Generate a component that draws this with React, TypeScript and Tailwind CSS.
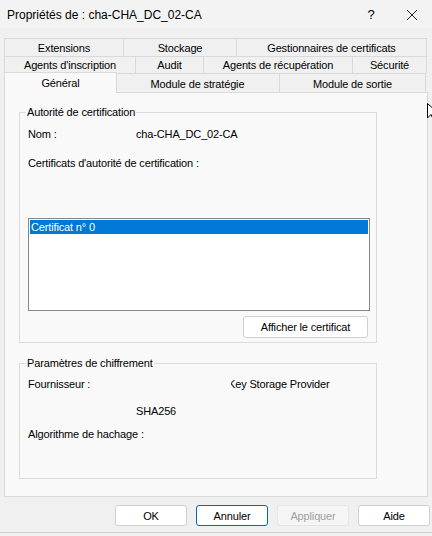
import React from "react";

const font = { fontFamily: '"Liberation Sans", Arial, sans-serif', letterSpacing: "-0.15px" };

function Tab({ w, label }: { w: string; label: string }) {
  return (
    <div
      className={`${w} shrink-0 flex items-center justify-center pt-px border-t border-l border-r border-[#d9d9d9] -ml-px first:ml-0 text-[11px] leading-[13px] text-black bg-[#f0f0f0]`}
    >
      {label}
    </div>
  );
}

export default function App() {
  return (
    <div className="relative w-[432px] h-[536px] bg-[#f0f0f0] text-black overflow-hidden" style={font}>
      {/* Title bar */}
      <div className="h-[30px] flex items-center bg-[#f3f3f3] border-b border-[#ebebeb]">
        <div className="pl-[7px] text-[12px] leading-[14px] tracking-normal">Propriétés de : cha-CHA_DC_02-CA</div>
        <div className="ml-auto flex items-center">
          <div className="w-[20px] text-center text-[13px] leading-[14px] mr-[25px]">?</div>
          <svg width="12" height="12" viewBox="0 0 12 12" className="mr-[14px]">
            <path d="M1 1L11 11M11 1L1 11" stroke="#222" strokeWidth="1" />
          </svg>
        </div>
      </div>

      {/* Tabs */}
      <div className="mt-[8px] ml-[4px] w-[422px] flex flex-col">
        <div className="h-[18px] flex">
          <Tab w="w-[120px]" label="Extensions" />
          <Tab w="w-[114px]" label="Stockage" />
          <Tab w="w-[191px]" label="Gestionnaires de certificats" />
        </div>
        <div className="h-[17px] flex">
          <Tab w="w-[132px]" label="Agents d'inscription" />
          <Tab w="w-[69px]" label="Audit" />
          <Tab w="w-[150px]" label="Agents de récupération" />
          <Tab w="w-[75px]" label="Sécurité" />
        </div>
        <div className="h-[19px] flex items-end">
          <div className="relative z-10 w-[113px] h-[21px] -mb-px shrink-0 flex items-start pt-[4px] justify-center border-t border-l border-r border-[#d9d9d9] bg-[#f9f9f9] text-[11px] leading-[13px]">
            Général
          </div>
          <div className="w-[164px] h-[19px] -ml-px shrink-0 flex items-center justify-center pt-[3px] border-t border-r border-[#d9d9d9] text-[11px] leading-[13px]">
            Module de stratégie
          </div>
          <div className="w-[147px] h-[19px] -ml-px shrink-0 flex items-center justify-center pt-[3px] border-t border-l border-r border-[#d9d9d9] text-[11px] leading-[13px]">
            Module de sortie
          </div>
        </div>
      </div>

      {/* Panel */}
      <div className="ml-[4px] w-[424px] h-[405px] border border-[#d9d9d9] bg-[#f9f9f9] pl-[14px]">
        <fieldset className="mt-[12px] w-[358px] h-[238px] border border-[#dcdcdc] pl-[8px] pr-[6px]">
          <legend className="ml-[-2px] px-[1px] text-[11px] leading-[14px]">Autorité de certification</legend>
          <div className="mt-[8px] h-[14px] flex text-[11px] leading-[14px]">
            <div className="w-[108px]">Nom :</div>
            <div>cha-CHA_DC_02-CA</div>
          </div>
          <div className="mt-[15px] h-[14px] text-[11px] leading-[14px]">Certificats d'autorité de certification :</div>
          <div className="mt-[48px] w-[342px] h-[93px] border border-[#828790] bg-white p-px">
            <div className="h-[14px] bg-[#0078d7] text-white text-[11px] leading-[14px] pl-[1px]">Certificat n° 0</div>
          </div>
          <div className="mt-[5px] flex justify-end pr-[2px]">
            <div className="w-[125px] h-[22px] rounded-[3px] border border-[#d0d0d0] bg-white flex items-center justify-center text-[11px] leading-[14px]">
              Afficher le certificat
            </div>
          </div>
        </fieldset>

        <fieldset className="mt-[13px] w-[358px] h-[123px] border border-[#dcdcdc] pl-[8px] pr-[6px]">
          <legend className="ml-[-2px] px-[1px] text-[11px] leading-[14px]">Paramètres de chiffrement</legend>
          <div className="mt-[7px] h-[14px] flex text-[11px] leading-[14px]">
            <div className="w-[203px]">Fournisseur :</div>
            <div className="w-[130px] overflow-hidden whitespace-nowrap">
              <span className="ml-[-3px] inline-block">Key Storage Provider</span>
            </div>
          </div>
          <div className="mt-[13px] h-[14px] pl-[108px] text-[11px] leading-[14px]">SHA256</div>
          <div className="mt-[9px] h-[14px] text-[11px] leading-[14px]">Algorithme de hachage :</div>
        </fieldset>
      </div>

      {/* Buttons */}
      <div className="mt-[8px] pl-[115px] flex gap-[9px]">
        <div className="w-[72px] h-[21px] rounded-[3px] border border-[#d0d0d0] bg-white flex items-center justify-center text-[11px] leading-[14px]">OK</div>
        <div className="w-[72px] h-[21px] rounded-[3px] border border-[#0067c0] bg-white flex items-center justify-center text-[11px] leading-[14px]">Annuler</div>
        <div className="w-[72px] h-[21px] rounded-[3px] border border-[#e5e5e5] bg-[#f5f5f5] flex items-center justify-center text-[11px] leading-[14px] text-[#a0a0a0]">Appliquer</div>
        <div className="w-[72px] h-[21px] rounded-[3px] border border-[#d0d0d0] bg-white flex items-center justify-center text-[11px] leading-[14px]">Aide</div>
      </div>

      <div className="absolute left-0 right-0 bottom-[3px] h-px bg-[#cfcfcf]" />

      {/* Mouse cursor */}
      <svg className="absolute left-[427px] top-[103px]" width="8" height="18" viewBox="0 0 8 18">
        <path d="M0.5 0.5 L0.5 15 L4 11.5 L6.5 17 L8 16.5 L8 10 L11 10 Z" fill="#fff" stroke="#000" strokeWidth="1" />
      </svg>
    </div>
  );
}
